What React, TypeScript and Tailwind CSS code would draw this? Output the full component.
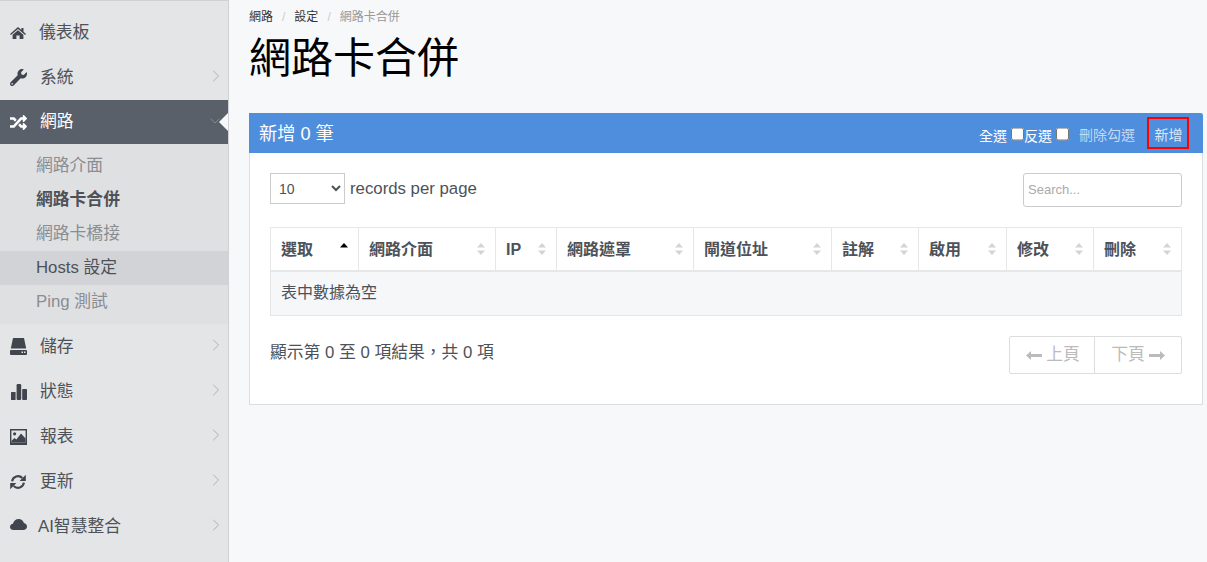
import { FaWrench, FaRandom } from "react-icons/fa";
import { ChevronRight, ChevronDown } from "lucide-react";
import type { ReactNode } from "react";

const FONT = "font-['Liberation_Sans','Noto_Sans_CJK_TC',sans-serif]";

function HomeIcon() {
  return (
    <svg viewBox="0 0 16 12" className="h-[12px] w-[16px] fill-[#3f444d]">
      <path d="M8 0l3.4 2.9V1h2.1v3.7L16 6.9l-.9 1L8 1.9.9 7.9l-.9-1z" />
      <path d="M8 3.2l5.4 4.6V12H9.6V8.4H6.4V12H2.6V7.8z" />
    </svg>
  );
}

function HddIcon() {
  return (
    <svg viewBox="0 0 17 17" className="h-[17px] w-[17px] fill-[#3f444d]">
      <path d="M3 0h11l2.2 10.6H.8z" />
      <path fillRule="evenodd" d="M1 12h15a1 1 0 0 1 1 1v3a1 1 0 0 1-1 1H1a1 1 0 0 1-1-1v-3a1 1 0 0 1 1-1zM11.5 13.6v1.5H13v-1.5zM14 13.6v1.5h1.5v-1.5z" />
    </svg>
  );
}

function BarsIcon() {
  return (
    <svg viewBox="0 0 16 16" className="ml-px h-[16px] w-[16px] fill-[#3f444d]">
      <rect x="0" y="8" width="4.6" height="8" rx="0.6" />
      <rect x="5.6" y="0" width="4.6" height="16" rx="1.2" />
      <rect x="11.2" y="5" width="4.8" height="11" rx="0.8" />
    </svg>
  );
}

function PictureIcon() {
  return (
    <svg viewBox="0 0 17 16" className="h-[16px] w-[17px] fill-[#3f444d]">
      <path fillRule="evenodd" d="M0 0h17v16H0zM1.4 1.4v12.2h14.2V1.4z" />
      <path d="M1.4 12l3-3 2 1.6L11 4.5l4.6 5v4.1H1.4z" />
      <circle cx="4.6" cy="4.8" r="1.6" />
    </svg>
  );
}

function RefreshIcon() {
  return (
    <svg viewBox="0 0 16 16" className="h-[16px] w-[16px] fill-[#3f444d]">
      <path d="M2.1 7.4A6 6 0 0 1 12.3 4" fill="none" stroke="#3f444d" strokeWidth="2.1" />
      <path d="M15.8.7v6.2H9.6z" />
      <path d="M13.9 8.6A6 6 0 0 1 3.7 12" fill="none" stroke="#3f444d" strokeWidth="2.1" />
      <path d="M.2 15.3V9.1h6.2z" />
    </svg>
  );
}

function CloudIcon() {
  return (
    <svg viewBox="0 0 17 11" className="h-[11px] w-[17px] -translate-y-[2px] fill-[#3f444d]">
      <path d="M3.6 11C1.6 11 0 9.6 0 7.9c0-1.6 1.3-2.9 3-3.1C3.6 2 6 0 8.7 0c2.6 0 4.7 1.7 5.2 4.1 1.8.3 3.1 1.9 3.1 3.6 0 1.9-1.6 3.3-3.6 3.3z" />
    </svg>
  );
}

function SortIcon({ active }: { active?: boolean }) {
  return (
    <svg viewBox="0 0 8 12" className={active ? "h-[12px] w-[8px] fill-black" : "h-[12px] w-[8px] fill-[#d3d4d6]"}>
      <path d="M4 0l4 4.5H0z" />
      {!active && <path d="M4 12L0 7.5h8z" />}
    </svg>
  );
}

function ArrowIcon({ flip }: { flip?: boolean }) {
  return (
    <svg viewBox="0 0 16 9" className={flip ? "h-[9px] w-[16px] rotate-180 fill-[#bbb]" : "h-[9px] w-[16px] fill-[#bbb]"}>
      <path d="M0 4.5L5 0v3h11v3H5v3z" />
    </svg>
  );
}

const MENU_TOP: { icon: ReactNode; label: string; arrow?: boolean; iconWidth: string }[] = [
  { icon: <HomeIcon />, label: "儀表板", iconWidth: "w-[29px]" },
  { icon: <FaWrench className="h-[17px] w-[17px]" />, label: "系統", arrow: true, iconWidth: "w-[30px]" },
];

const MENU_BOTTOM: { icon: ReactNode; label: string; iconWidth: string }[] = [
  { icon: <HddIcon />, label: "儲存", iconWidth: "w-[30px]" },
  { icon: <BarsIcon />, label: "狀態", iconWidth: "w-[30px]" },
  { icon: <PictureIcon />, label: "報表", iconWidth: "w-[30px]" },
  { icon: <RefreshIcon />, label: "更新", iconWidth: "w-[30px]" },
  { icon: <CloudIcon />, label: "AI智慧整合", iconWidth: "w-[28px]" },
];

const COLUMNS = [
  { label: "選取", width: "w-[88px]", active: true },
  { label: "網路介面", width: "w-[137px]" },
  { label: "IP", width: "w-[61px]" },
  { label: "網路遮罩", width: "w-[137px]" },
  { label: "閘道位址", width: "w-[138px]" },
  { label: "註解", width: "w-[87px]" },
  { label: "啟用", width: "w-[88px]" },
  { label: "修改", width: "w-[87px]" },
  { label: "刪除", width: "w-[88px]" },
];

function MenuItem({ icon, label, arrow, iconWidth }: { icon: ReactNode; label: string; arrow?: boolean; iconWidth: string }) {
  return (
    <div className="flex h-[45px] items-center pl-[10px] pr-[2px] text-[#4d5259]">
      <span className={`flex shrink-0 text-[#3f444d] ${iconWidth}`}>{icon}</span>
      <span className="text-[16.8px]">{label}</span>
      {arrow && <ChevronRight className="ml-auto h-[20px] w-[20px] -translate-y-[2px] text-[#a8abaf]" strokeWidth={1.1} />}
    </div>
  );
}

function Sidebar() {
  return (
    <aside className="min-h-[562px] w-[229px] shrink-0 border-r border-t border-[#d0d1d3] bg-[#e4e5e7] pt-[9px]">
      {MENU_TOP.map((item) => (
        <MenuItem key={item.label} {...item} />
      ))}
      <div className="relative flex h-[44px] items-center bg-[#5a6069] pl-[10px] pr-[5px] text-white">
        <FaRandom className="mr-[13px] h-[17px] w-[17px]" />
        <span className="text-[16.8px]">網路</span>
        <ChevronDown className="ml-auto h-[16px] w-[16px] -translate-y-px text-[#8b8f95]" strokeWidth={1.3} />
        <span className="absolute right-0 top-1/2 -translate-y-1/2 border-y-[9px] border-r-[9px] border-y-transparent border-r-[#f7f8fa]" />
      </div>
      <div className="bg-[#dfe0e2] pb-[5px] pt-[5px] text-[16.8px] text-[#8a8d92]">
        <div className="flex h-[34px] items-center pl-[36px]">網路介面</div>
        <div className="flex h-[34px] items-center pl-[36px] font-bold text-[#4d5259]">網路卡合併</div>
        <div className="flex h-[34px] items-center pl-[36px]">網路卡橋接</div>
        <div className="flex h-[34px] items-center bg-[#d2d3d6] pl-[36px] text-[#4d5259]">Hosts 設定</div>
        <div className="flex h-[34px] items-center pl-[36px]">Ping 測試</div>
      </div>
      {MENU_BOTTOM.map((item) => (
        <MenuItem key={item.label} {...item} arrow />
      ))}
    </aside>
  );
}

function DataTable() {
  return (
    <table className="w-[911px] table-fixed border-collapse text-[16px] text-[#4d5259]">
      <thead>
        <tr className="h-[43px] border-b-2 border-[#e6e7e9]">
          {COLUMNS.map((col) => (
            <th key={col.label} className={`${col.width} border border-b-0 border-[#e6e7e9] px-[10px] text-left font-bold`}>
              <div className="flex items-center justify-between">
                <span className="pt-[2px]">{col.label}</span>
                <SortIcon active={col.active} />
              </div>
            </th>
          ))}
        </tr>
      </thead>
      <tbody>
        <tr className="h-[45px] bg-[#f6f7f9]">
          <td colSpan={9} className="border border-[#e6e7e9] pl-[10px]">表中數據為空</td>
        </tr>
      </tbody>
    </table>
  );
}

export default function App() {
  return (
    <div className={`${FONT} flex min-h-[562px] overflow-hidden bg-[#f7f8fa]`}>
      <Sidebar />
      <main className="w-[978px] pl-[20px] pr-[4px]">
        <nav className="flex h-[33px] items-center text-[12px] text-[#333]">
          <span>網路</span>
          <span className="px-[9px] text-[#ccc]">/</span>
          <span>設定</span>
          <span className="px-[9px] text-[#ccc]">/</span>
          <span className="text-[#999]">網路卡合併</span>
        </nav>
        <h1 className="flex h-[51px] items-center text-[42px] font-normal text-black">網路卡合併</h1>
        <section className="mt-[29px] border border-[#dcdde0] bg-white">
          <header className="-mx-px -mt-px flex h-[40px] items-center rounded-tr-[3px] bg-[#4f8ddd] pl-[10px] pr-[14px] text-white">
            <h2 className="pt-[3px] text-[18.2px]">新增 0 筆</h2>
            <div className="ml-auto flex items-center text-[14px]">
              <label className="flex items-center pt-[7px]">
                全選
                <input type="checkbox" className="ml-[4px] h-[13px] w-[13px] -translate-y-[2.5px]" />
              </label>
              <label className="flex items-center pt-[7px]">
                反選
                <input type="checkbox" className="ml-[4px] h-[13px] w-[13px] -translate-y-[2.5px]" />
              </label>
              <span className="ml-[10px] pt-[5px] text-[#c5d9f3]">刪除勾選</span>
              <span className="ml-[12px] flex h-[32px] w-[42px] items-center justify-center border-2 border-[#ff0000] pl-[1px] pt-[5px] text-[#dce8f8]">新增</span>
            </div>
          </header>
          <div className="px-[20px] pb-[30px] pt-[20px]">
            <div className="mb-[20px] flex items-start justify-between">
              <div className="flex items-center text-[16.8px] text-[#4d5259]">
                <select className="h-[31px] w-[75px] border border-[#ccc] bg-white pl-[4px] text-[14px]">
                  <option>10</option>
                </select>
                <span className="ml-[5px]">records per page</span>
              </div>
              <input
                placeholder="Search..."
                className="h-[34px] w-[159px] rounded-[3px] border border-[#ccc] bg-white px-[4px] pb-[2px] text-[13px] placeholder:text-[#aaa]"
              />
            </div>
            <DataTable />
            <div className="mt-[20px] flex items-start justify-between">
              <span className="mt-[4px] text-[16.8px] text-[#4d5259]">顯示第 0 至 0 項結果，共 0 項</span>
              <div className="flex h-[38px] rounded-[2px] border border-[#ddd] text-[16.8px] text-[#bbb]">
                <span className="flex w-[85px] items-center justify-center gap-[4px] border-r border-[#ddd] pl-[2px]">
                  <ArrowIcon />上頁
                </span>
                <span className="flex w-[86px] items-center justify-center gap-[4px]">
                  下頁<ArrowIcon flip />
                </span>
              </div>
            </div>
          </div>
        </section>
      </main>
    </div>
  );
}
